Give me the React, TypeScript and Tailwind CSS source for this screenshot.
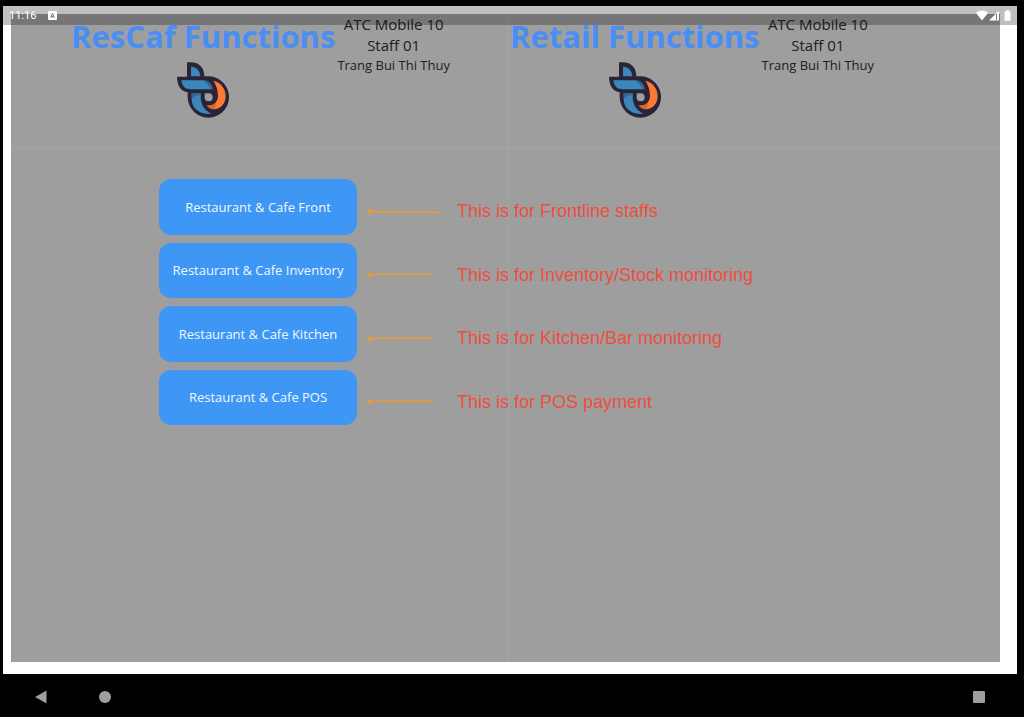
import React from "react";

type Entry = { label: string; note: string; arrow: string };

const entries: Entry[] = [
  { label: "Restaurant & Cafe Front", note: "This is for Frontline staffs", arrow: "M6 5.5 L77 6.5" },
  { label: "Restaurant & Cafe Inventory", note: "This is for Inventory/Stock monitoring", arrow: "M6 5.5 H69" },
  { label: "Restaurant & Cafe Kitchen", note: "This is for Kitchen/Bar monitoring", arrow: "M6 5.5 L69 5" },
  { label: "Restaurant & Cafe POS", note: "This is for POS payment", arrow: "M6 5.5 L69 5" },
];

function Logo() {
  return (
    <svg viewBox="51 36 162 168" className="h-14 w-[54px]" role="img" aria-label="Logo">
      <path
        d="M81 37H93C118 37 133 55 133 79H148A62 62 0 1 1 83 141V127C63 124 51 107 51 80H81Z"
        fill="#2b2438"
      />
      <path d="M93 50C109 50 120 62 121 79H93Z" fill="#3a86bd" />
      <path d="M64 91H130C147 92 156 104 158 118H93C75 118 66 108 64 91Z" fill="#3a86bd" />
      <path d="M124 91H130C147 92 156 104 158 118H151C148 105 139 96 124 91Z" fill="#30688f" />
      <path d="M95 130H122V140C122 165 135 182 154 191C120 196 95 175 95 148Z" fill="#3a86bd" />
      <path d="M95 130H122V134C111 136 102 140 95 148Z" fill="#30688f" />
      <path
        d="M160 92C182 97 197 115 197 139C197 162 180 178 162 178C152 178 145 173 141 166C163 169 174 153 174 137C174 119 168 104 160 92Z"
        fill="#ff7a30"
      />
      <path d="M141 166C152 169 162 165 167 159C169 167 164 175 158 178C150 177 144 172 141 166Z" fill="#d9622b" />
      <path d="M134 130H146A12 12 0 1 1 134 142Z" fill="#9e9e9e" />
    </svg>
  );
}

function Header({ title, className }: { title: string; className: string }) {
  return (
    <header className={`flex h-[134px] items-start gap-0.5 border-b border-[#a7a7a7] ${className}`}>
      <div className="flex flex-col items-center">
        <h1 className="mt-1 text-[31px] leading-9 font-bold whitespace-nowrap text-[#4a8ef5]">{title}</h1>
        <div className="mt-2 pl-0.5">
          <Logo />
        </div>
      </div>
      <div className="flex flex-col items-center whitespace-nowrap text-[#202020]">
        <p className="text-[15px] leading-[21px]">ATC Mobile 10</p>
        <p className="text-[15px] leading-[21px]">Staff 01</p>
        <p className="text-[13px] leading-[18px]">Trang Bui Thi Thuy</p>
      </div>
    </header>
  );
}

function StatusBar() {
  return (
    <div className="absolute inset-x-0 top-0 flex h-[19px] items-center bg-black/25 pr-[5px] pl-1.5 text-white">
      <span className="pt-px font-[Roboto,sans-serif] text-[11px] leading-4">11:16</span>
      <svg viewBox="0 0 9 9" className="ml-3 size-[9px]" aria-hidden="true">
        <rect width="9" height="9" rx="1" fill="#fff" />
        <path d="M2.7 7 4.5 2.2 6.3 7M3.3 5.6H5.7" stroke="#777" strokeWidth="1" fill="none" />
      </svg>
      <svg viewBox="0 0 36 11" className="ml-auto h-[11px] w-9" aria-hidden="true">
        <path d="M0 3C3.5-.2 8.5-.2 12 3L6 10.500Z" fill="#fff" />
        <path d="M13 10.500 23 .8V10.500Z" fill="#fff" />
        <path d="M20.500 4V10" stroke="#777" strokeWidth="1" />
        <path d="M28.500 1.500H30V.3H33V1.500H34.500V10.700H28.500Z" fill="#fff" />
      </svg>
    </div>
  );
}

export default function App() {
  return (
    <div className="flex min-h-screen flex-col bg-black pt-1.5 pr-[7px] pl-[3px] font-['Open_Sans',sans-serif]">
      <div className="relative flex flex-1 flex-col bg-white pt-2 pr-[17px] pb-3 pl-2">
        <main className="grid flex-1 grid-cols-[minmax(0,498fr)_minmax(0,491fr)] bg-[#9e9e9e]">
          <section className="border-r border-[#a5a5a5]">
            <Header title="ResCaf Functions" className="justify-center pl-0.5" />
            <ul className="mt-[31px] ml-[148px] grid h-[246px] auto-rows-fr gap-2">
              {entries.map((e) => (
                <li key={e.label} className="flex">
                  <button
                    type="button"
                    className="w-[198px] shrink-0 rounded-xl bg-[#3f97f5] pt-px text-[13px] text-[#f0f7ff]"
                  >
                    {e.label}
                  </button>
                  <div className="relative flex items-center gap-3.5 pt-[9px] pl-2">
                    <svg viewBox="0 0 78 11" className="h-[11px] w-[78px] shrink-0" aria-hidden="true">
                      <path d={e.arrow} stroke="#f09a36" strokeWidth="1.300" />
                      <path d="M.5 5.500 6 2.800V8.200Z" fill="#f09a36" />
                    </svg>
                    <span className="font-['Liberation_Sans',sans-serif] text-[18px] leading-6 whitespace-nowrap text-[#ed4f3f]">
                      {e.note}
                    </span>
                  </div>
                </li>
              ))}
            </ul>
          </section>
          <section>
            <Header title="Retail Functions" className="pl-px" />
          </section>
        </main>
        <StatusBar />
      </div>
      <nav className="flex h-[43px] items-center pt-0.5 pr-8 pl-8">
        <button type="button" aria-label="Back">
          <svg viewBox="0 0 12 14" className="h-3.5 w-3" aria-hidden="true">
            <path d="M0 7 11.500.5V13.500Z" fill="#9e9e9e" />
          </svg>
        </button>
        <button type="button" aria-label="Home" className="ml-[52px] size-3 rounded-full bg-[#9e9e9e]" />
        <button type="button" aria-label="Recent apps" className="ml-auto size-3 rounded-[1px] bg-[#9e9e9e]" />
      </nav>
    </div>
  );
}
